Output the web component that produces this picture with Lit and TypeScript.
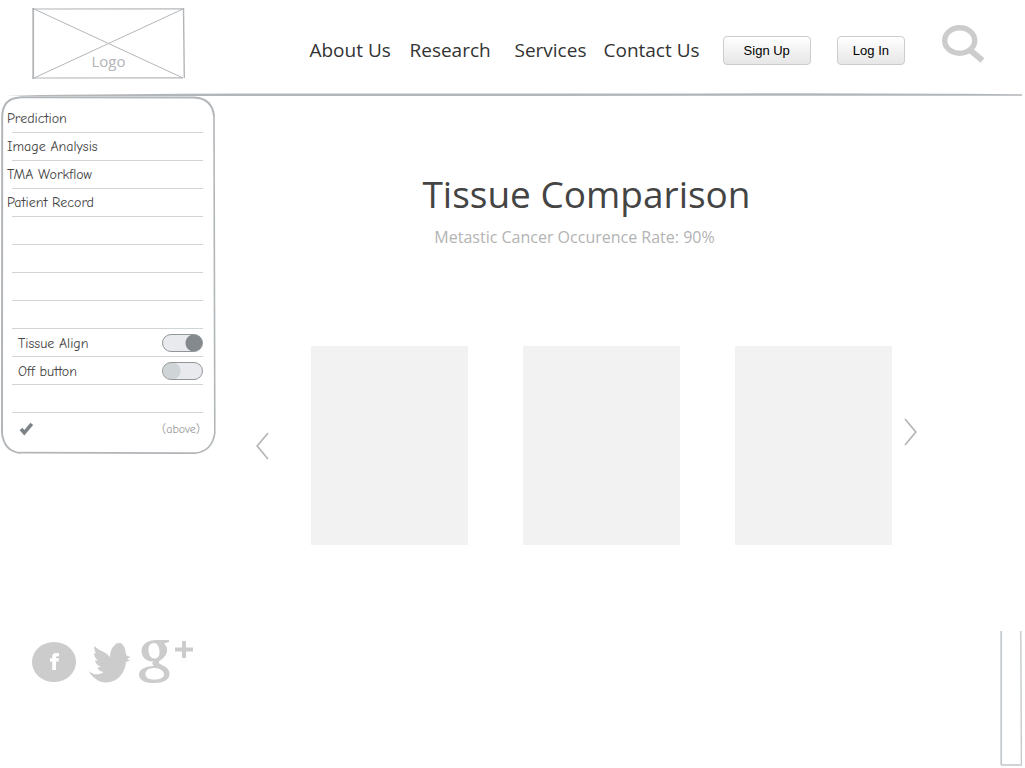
import { LitElement, html, css } from "lit";
import { customElement } from "lit/decorators.js";

const INK = "#b3b6b9";

@customElement("site-header")
class SiteHeader extends LitElement {
  static styles = css`
    :host { display: block; font-family: "Open Sans", "Noto Sans", sans-serif; }
    .bar { display: flex; align-items: flex-start; box-sizing: border-box; height: 92px; padding: 8px 40px 0 32px; }
    .logo { display: grid; width: 153px; height: 71px; color: #b3b3b8; font-size: 15px; line-height: 22px; text-decoration: none; }
    .logo svg, .logo span { grid-area: 1 / 1; }
    .logo span { place-self: end center; padding-bottom: 7px; }
    .nav { display: grid; grid-template-columns: 100px 105px 89px auto; margin-left: auto; padding-top: 28px; }
    .nav a { color: #333; font-size: 19px; line-height: 28px; text-decoration: none; white-space: nowrap; }
    .actions { display: flex; gap: 26px; margin-left: 23px; padding-top: 28px; }
    .btn { height: 29px; padding: 0 15px; border: 1px solid #ccc; border-radius: 4px; background: linear-gradient(#fff, #e6e6e6);
      color: #000; font: 13px/16px "Liberation Sans", Arial, sans-serif; white-space: nowrap; }
    .wide { padding: 0 20px; }
    .search { margin-left: 37px; padding: 17px 0 0; border: 0; background: none; line-height: 0; }
    .rule { display: block; width: 100%; height: 4px; }
  `;
  render() {
    return html`
      <header>
        <div class="bar">
          <a class="logo" href="#">
            <svg width="153" height="71" viewBox="0 0 153 71" fill="none" stroke=${INK} aria-hidden="true">
              <path d="M0 1 152 .8M0 70 151 69.8" stroke-width="1.2" />
              <path d="M1.2 0V71" stroke-width="1.8" />
              <path d="M151.5 0 152.3 70" stroke-width="1.4" />
              <path d="M2 1 151 70M2 70 151 1" stroke-width="1" />
            </svg>
            <span>Logo</span>
          </a>
          <nav class="nav">
            <a href="#about">About Us</a><a href="#research">Research</a><a href="#services">Services</a><a href="#contact">Contact Us</a>
          </nav>
          <div class="actions">
            <button class="btn wide">Sign Up</button>
            <button class="btn">Log In</button>
          </div>
          <button class="search" aria-label="Search">
            <svg width="43" height="38" viewBox="0 0 43 38" fill="none" stroke="#ccc">
              <ellipse cx="17.7" cy="15.5" rx="15" ry="12.8" stroke-width="5.4" />
              <path d="M27.5 24.5 40.5 35.5" stroke-width="6" />
            </svg>
          </button>
        </div>
        <svg class="rule" viewBox="0 0 1025 4" preserveAspectRatio="none" aria-hidden="true">
          <path d="M5 3.4Q120 2 240 1.6L700 1.4Q850 1 960 1.8L1022 2.2V3.8L240 4 60 4.4Z" fill=${INK} />
        </svg>
      </header>
    `;
  }
}

@customElement("side-panel")
class SidePanel extends LitElement {
  static styles = css`
    :host { display: block; font-family: "Comic Sans MS", "Comic Neue", "Open Sans", sans-serif; font-size: 14px; line-height: 18px;
      font-variant-ligatures: none; color: #444; }
    .panel { position: relative; isolation: isolate; box-sizing: border-box; width: 216px; padding: 9px 12px; }
    .frame { position: absolute; inset: 0; width: 100%; height: 100%; z-index: -1; }
    .list { list-style: none; margin: 0; padding: 0; }
    .row { display: flex; align-items: center; justify-content: space-between; box-sizing: border-box; height: 28px;
      margin-right: 1px; border-bottom: 1px solid #cfd4d5; }
    .row a { margin-left: -5px; color: inherit; text-decoration: none; }
    .row label { padding: 3px 0 0 6px; }
    .foot { display: flex; align-items: center; justify-content: space-between; height: 32px; padding: 0 4px 0 7px; color: #999; font-size: 12px; }
    .switch { appearance: none; box-sizing: border-box; width: 41px; height: 18px; margin: 0; border: 1px solid #929699; border-radius: 9px;
      background: radial-gradient(circle at 9px 8px, #cfd4d6 8px, transparent 9px) #e9eaee; }
    .switch:checked { background: radial-gradient(circle at 31px 8px, #84898d 8px, transparent 9px) #e9eaee; }
  `;
  render() {
    const links = ["Prediction", "Image Analysis", "TMA Workflow", "Patient Record"];
    return html`
      <aside class="panel">
        <svg class="frame" viewBox="0 0 216 358" preserveAspectRatio="none" fill="none" stroke=${INK} aria-hidden="true">
          <path d="M20 1.5Q3 2 2.2 20L2 337Q4 355 20 357" stroke-width="2" />
          <path d="M20 1.2 194 1.4Q212 2 214 20" stroke-width="2" />
          <path d="M214 20 214.8 337" stroke-width="1.6" />
          <path d="M20 356.6 194 357.2Q212 356 214.8 337" stroke-width="1.7" />
        </svg>
        <ul class="list">
          ${links.map((t) => html`<li class="row"><a href="#">${t}</a></li>`)}
          ${[0, 1, 2, 3].map(() => html`<li class="row" aria-hidden="true"></li>`)}
          <li class="row"><label for="align">Tissue Align</label><input id="align" class="switch" type="checkbox" role="switch" checked /></li>
          <li class="row"><label for="off">Off button</label><input id="off" class="switch" type="checkbox" role="switch" /></li>
          <li class="row" aria-hidden="true"></li>
        </ul>
        <div class="foot">
          <svg width="15" height="14" viewBox="0 0 15 14" fill="none" stroke="#7d8286" stroke-width="3.6" aria-hidden="true"><path d="M2 7 5.3 10.8 12.8 1.8" /></svg>
          <span>(above)</span>
        </div>
      </aside>
    `;
  }
}

@customElement("tissue-carousel")
class TissueCarousel extends LitElement {
  static styles = css`
    :host { display: block; font-family: "Open Sans", "Noto Sans", sans-serif; }
    .title { margin: 0; color: #444; font-size: 37px; line-height: 50px; font-weight: 400; text-align: center; }
    .sub { margin: 6px 24px 0 0; color: #b3b3b3; font-size: 16px; line-height: 24px; text-align: center; }
    .stage { display: flex; align-items: center; margin-top: 97px; }
    .cards { display: flex; flex: 1; gap: 55px; margin: 0 12px 0 42px; }
    .card { flex: 1; height: 199px; background: #f2f2f2; }
    .arrow { padding: 0; border: 0; background: none; line-height: 0; }
    .next { padding-bottom: 28px; }
  `;
  render() {
    return html`
      <section>
        <h1 class="title">Tissue Comparison</h1>
        <p class="sub">Metastic Cancer Occurence Rate: 90%</p>
        <div class="stage">
          <button class="arrow" aria-label="Previous">
            <svg width="13" height="28" viewBox="0 0 13 28" fill="none" stroke="#b8b8b8" stroke-width="1.8"><path d="M12 1 1.2 14 12 27" /></svg>
          </button>
          <div class="cards">
            <div class="card"></div><div class="card"></div><div class="card"></div>
          </div>
          <button class="arrow next" aria-label="Next">
            <svg width="13" height="28" viewBox="0 0 13 28" fill="none" stroke="#b8b8b8" stroke-width="1.8"><path d="M1 1 11.8 14 1 27" /></svg>
          </button>
        </div>
      </section>
    `;
  }
}

@customElement("site-footer")
class SiteFooter extends LitElement {
  static styles = css`
    :host { display: block; }
    .foot { display: flex; justify-content: space-between; align-items: flex-start; padding: 0 3px 2px 32px; }
    .social { display: flex; padding-top: 8px; }
    .social a { line-height: 0; }
    .bird { margin: 0 8px 0 13px; }
  `;
  render() {
    return html`
      <footer class="foot">
        <div class="social">
          <a href="#" aria-label="Facebook">
            <svg width="44" height="46" viewBox="0 0 44 46">
              <ellipse cx="22" cy="23" rx="22" ry="20" fill="#ccc" />
              <path d="M20.2 31V22.6H18V19.2H20.2V17.4Q20.2 14 24.2 14H27V17.2H25.2Q24 17.2 24 18.4V19.2H27L26.6 22.6H24V31Z" fill="#fff" />
            </svg>
          </a>
          <a class="bird" href="#" aria-label="Twitter">
            <svg width="42" height="46" viewBox="0 0 42 46" fill="#ccc">
              <path d="M5.500 7C9 11 14 12 18 15L21 18C21 13 23 7 27 5.500L26 4.500L29 4.500L29.500 3L30.500 4.500L32 4C34.500 6 36.500 9 36.500 13L37.500 16.500L41.500 18L38 20L41 21.500L37 23C36.500 30 33 36 28 40C22 44.500 12 44.500 7.500 40.500C3.500 38 1 35 0 32C4 36 10 36.500 14.500 33C11.500 32.500 9 31 8.500 28.500L12 28C8.500 26.500 6.500 24.500 6 21.500L9 21.500C6.500 19.500 5 17 5 14L7.500 14.500C5.500 12.500 5 10 5.500 7Z" />
            </svg>
          </a>
          <a href="#" aria-label="Google Plus">
            <svg width="55" height="46" viewBox="0 0 55 46" fill="#ccc">
              <path fill-rule="evenodd" d="M30 1V3L25 4.500C28 7 28.500 10 28 13C27 17 24 19.500 21 21.500C19 23 20 24.500 22 25.500C27 28 30.500 30 30.500 35C30.500 41 24 44 15 44C6 44 0 41.500 0 35.500C0 30 6 27.500 15 27C13 25.500 13 24.500 14 22.500C7 22.500 2.500 18 2.500 12C2.500 5 9 1 17 1ZM15 4C11 4 9.500 7 9.500 11C9.500 16 12 19.500 15.500 19.500C19 19.500 20.500 17 20.500 13C20.500 8 18.500 4 15 4ZM16 29C10 29 6.500 31 6.500 35C6.500 39 10 40.500 15.500 40.500C21 40.500 25 39 25 35.500C25 32 21 29 16 29Z" />
              <path d="M43 2H47V8.500H54V12.500H47V19H43V12.500H36V8.500H43Z" />
            </svg>
          </a>
        </div>
        <svg width="22" height="135" viewBox="0 0 22 135" fill="none" stroke="#c6cacd" aria-hidden="true">
          <path d="M1.200 0V134" stroke-width="1.800" />
          <path d="M20.800 0 21.400 133" stroke-width="1.400" />
          <path d="M1 134H22" stroke-width="1.600" />
        </svg>
      </footer>
    `;
  }
}

@customElement("app-root")
class AppRoot extends LitElement {
  static styles = css`
    :host { display: block; min-height: 100vh; background: #fff; }
    .page { display: flex; flex-direction: column; min-height: 100vh; }
    .body { display: flex; align-items: flex-start; flex: 1; }
    .main { flex: 1; padding: 73px 108px 86px 40px; }
  `;
  render() {
    return html`
      <div class="page">
        <site-header></site-header>
        <div class="body">
          <side-panel></side-panel>
          <tissue-carousel class="main"></tissue-carousel>
        </div>
        <site-footer></site-footer>
      </div>
    `;
  }
}
